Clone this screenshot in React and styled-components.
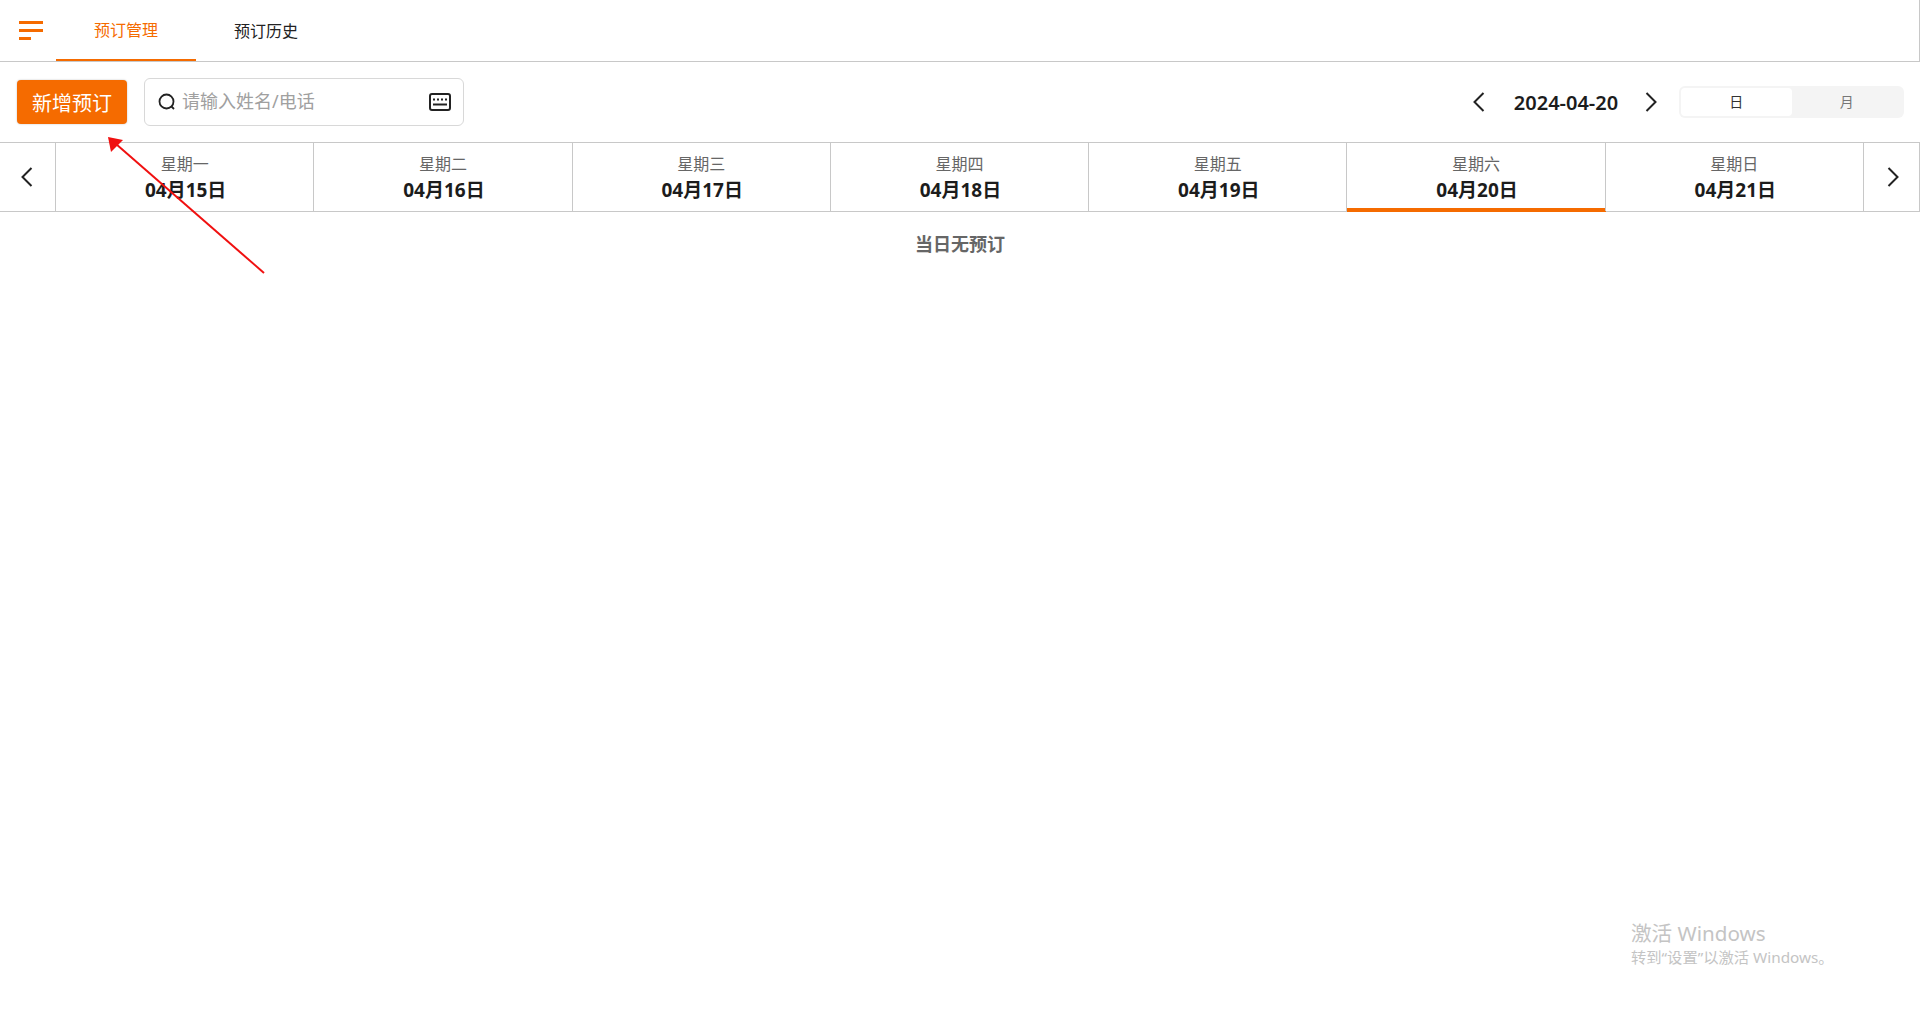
import React from "react";
import styled, { createGlobalStyle } from "styled-components";

const ORANGE = "#f56b00";
const LINE = "#c8c8c8";

const days = [
  { week: "星期一", date: "04月15日" },
  { week: "星期二", date: "04月16日" },
  { week: "星期三", date: "04月17日" },
  { week: "星期四", date: "04月18日" },
  { week: "星期五", date: "04月19日" },
  { week: "星期六", date: "04月20日", active: true },
  { week: "星期日", date: "04月21日" },
];

const Chevron = ({ dir, size = 20 }) => (
  <svg width={size} height={size} viewBox="0 0 20 20" fill="none" stroke="#222" strokeWidth="2">
    <path d={dir === "left" ? "M14.5 1 L5.5 10 L14.5 19" : "M5.5 1 L14.5 10 L5.5 19"} />
  </svg>
);

const App = () => {
  return (
    <Page>
      <GlobalStyle />
      <Header>
        <MenuButton>
          <MenuBar $width={24} />
          <MenuBar $width={24} />
          <MenuBar $width={12} />
        </MenuButton>
        <Tab $active>预订管理</Tab>
        <Tab>预订历史</Tab>
      </Header>

      <Toolbar>
        <AddButton>新增预订</AddButton>
        <SearchBox>
          <svg width="20" height="20" viewBox="0 0 20 20" fill="none" stroke="#222" strokeWidth="1.8">
            <circle cx="9.5" cy="9.5" r="7" />
            <path d="M14.5 14.5 L17 17" />
          </svg>
          <SearchInput>请输入姓名/电话</SearchInput>
          <svg width="22" height="18" viewBox="0 0 22 18" fill="none" stroke="#222">
            <rect x="1" y="1" width="20" height="16" rx="2" strokeWidth="2" />
            <path d="M4 6.5 H6 M8 6.5 H10 M12 6.5 H14 M16 6.5 H18" strokeWidth="2" />
            <path d="M4 11.5 H18" strokeWidth="2" />
          </svg>
        </SearchBox>
        <DateNav>
          <Chevron dir="left" />
          <DateText>2024-04-20</DateText>
          <Chevron dir="right" />
        </DateNav>
        <Segments>
          <Segment $active>日</Segment>
          <Segment>月</Segment>
        </Segments>
      </Toolbar>

      <WeekRow>
        <ArrowCell>
          <Chevron dir="left" />
        </ArrowCell>
        {days.map((d) => (
          <DayCell key={d.date} $active={d.active}>
            <WeekName>{d.week}</WeekName>
            <DayDate>{d.date}</DayDate>
          </DayCell>
        ))}
        <ArrowCell $last>
          <Chevron dir="right" />
        </ArrowCell>
      </WeekRow>

      <Empty>当日无预订</Empty>

      <Annotation width="180" height="150" viewBox="0 0 180 150">
        <path d="M156 136 L8 7" stroke="#f01010" strokeWidth="2" fill="none" />
        <polygon points="0,0 15,3 3,15" fill="#f01010" />
      </Annotation>

      <Watermark>
        <WatermarkTitle>激活 Windows</WatermarkTitle>
        <WatermarkHint>转到“设置”以激活 Windows。</WatermarkHint>
      </Watermark>
    </Page>
  );
};

export default App;

const GlobalStyle = createGlobalStyle`
  html, body {
    margin: 0;
    padding: 0;
    background: #fff;
  }
  * {
    box-sizing: border-box;
  }
`;

const Page = styled.div`
  position: relative;
  height: 1017px;
  overflow: hidden;
  font-family: "Noto Sans", "Noto Sans CJK SC", sans-serif;
  color: #222;
`;

const Header = styled.div`
  display: flex;
  align-items: stretch;
  height: 62px;
  border-bottom: 1px solid ${LINE};
  border-right: 1px solid ${LINE};
`;

const MenuButton = styled.div`
  width: 56px;
  padding: 21px 0 0 19px;
  display: flex;
  flex-direction: column;
  gap: 5px;
`;

const MenuBar = styled.span`
  display: block;
  width: ${(p) => p.$width}px;
  height: 3px;
  background: ${ORANGE};
`;

const Tab = styled.div`
  width: 140px;
  height: 61px;
  display: flex;
  align-items: center;
  justify-content: center;
  font-size: 16px;
  padding-bottom: ${(p) => (p.$active ? "4px" : "2px")};
  color: ${(p) => (p.$active ? ORANGE : "#222")};
  box-shadow: ${(p) => (p.$active ? `inset 0 -2px 0 ${ORANGE}` : "none")};
`;

const Toolbar = styled.div`
  height: 80px;
  padding: 0 16px 0 17px;
  display: flex;
  align-items: center;
`;

const AddButton = styled.div`
  width: 110px;
  height: 44px;
  background: ${ORANGE};
  color: #fff;
  font-size: 20px;
  border-radius: 4px;
  display: flex;
  align-items: center;
  justify-content: center;
  box-shadow: 0 0 2px rgba(0, 0, 0, 0.25);
`;

const SearchBox = styled.div`
  width: 320px;
  height: 48px;
  margin-left: 17px;
  padding: 0 12px 0 12px;
  border: 1px solid #d8d8d8;
  border-radius: 6px;
  display: flex;
  align-items: center;
  gap: 5px;
`;

const SearchInput = styled.div`
  flex: 1;
  font-size: 18px;
  color: #a0a0a0;
  margin-top: -4px;
`;

const DateNav = styled.div`
  margin-left: auto;
  display: flex;
  align-items: center;
  gap: 15px;
`;

const DateText = styled.div`
  width: 122px;
  padding-left: 2px;
  text-align: center;
  font-size: 20px;
  font-weight: 600;
  color: #1c1c1c;
`;

const Segments = styled.div`
  width: 225px;
  height: 32px;
  margin-left: 18px;
  padding: 2px;
  background: #f4f4f4;
  border-radius: 6px;
  display: flex;
`;

const Segment = styled.div`
  flex: 1;
  display: flex;
  align-items: center;
  justify-content: center;
  font-size: 14px;
  padding-bottom: 2px;
  border-radius: 4px;
  background: ${(p) => (p.$active ? "#fff" : "transparent")};
  color: ${(p) => (p.$active ? "#333" : "#777")};
`;

const WeekRow = styled.div`
  height: 70px;
  display: grid;
  grid-template-columns: 56px repeat(7, 1fr) 56px;
  border-top: 1px solid ${LINE};
  border-bottom: 1px solid ${LINE};
`;

const ArrowCell = styled.div`
  display: flex;
  align-items: center;
  justify-content: center;
  padding-left: ${(p) => (p.$last ? "3px" : "0")};
  padding-right: ${(p) => (p.$last ? "0" : "2px")};
  border-right: 1px solid ${LINE};
`;

const DayCell = styled.div`
  display: flex;
  flex-direction: column;
  align-items: center;
  justify-content: center;
  padding-top: 1px;
  border-right: 1px solid ${LINE};
  box-shadow: ${(p) => (p.$active ? `inset 0 -3px 0 ${ORANGE}, 0 1px 0 ${ORANGE}` : "none")};
`;

const WeekName = styled.div`
  font-size: 16px;
  line-height: 24px;
  color: #666;
`;

const DayDate = styled.div`
  font-size: 19px;
  line-height: 28px;
  font-weight: 700;
  padding-left: 2px;
  color: #1c1c1c;
`;

const Empty = styled.div`
  margin-top: 19px;
  text-align: center;
  font-size: 18px;
  line-height: 26px;
  font-weight: 700;
  color: #666;
`;

const Annotation = styled.svg`
  position: absolute;
  left: 108px;
  top: 137px;
`;

const Watermark = styled.div`
  position: absolute;
  left: 1631px;
  top: 919px;
  color: #c4c4c4;
`;

const WatermarkTitle = styled.div`
  font-size: 20.6px;
  line-height: 28px;
`;

const WatermarkHint = styled.div`
  font-size: 15.3px;
  line-height: 20px;
`;
